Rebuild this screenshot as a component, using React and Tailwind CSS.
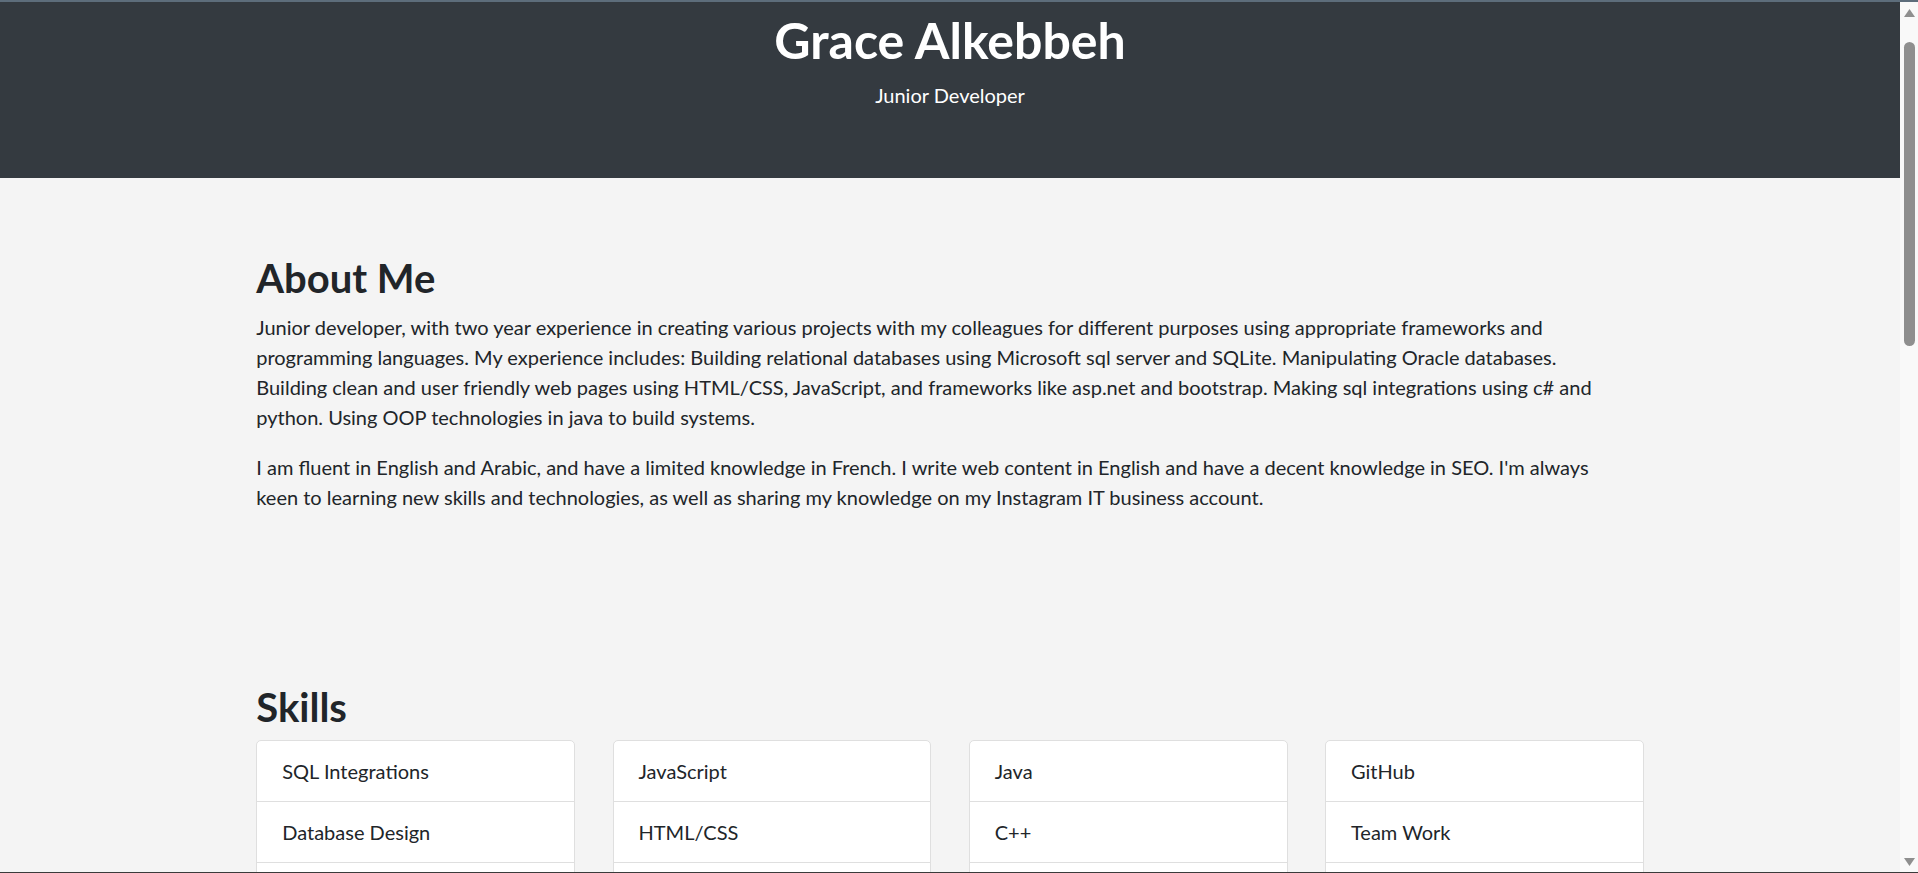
import React from "react";

const skills = [
  ["SQL Integrations", "Database Design"],
  ["JavaScript", "HTML/CSS"],
  ["Java", "C++"],
  ["GitHub", "Team Work"],
];

function Arrow({ down }) {
  return (
    <svg width="11" height="8" viewBox="0 0 11 8" className="block mx-auto">
      {down ? (
        <polygon points="0,0 11,0 5.5,8" fill="#8f8f8f" />
      ) : (
        <polygon points="0,8 11,8 5.5,0" fill="#8f8f8f" />
      )}
    </svg>
  );
}

export default function App() {
  return (
    <div className="h-[873px] w-full flex flex-col overflow-hidden bg-[#f4f4f4] font-['Lato',sans-serif] text-[#212529]">
      <div className="h-[2px] shrink-0 bg-[#5d6d7b]" />
      <div className="flex flex-1 min-h-0">
        <div className="flex-1 min-w-0 overflow-hidden">
          <header className="h-[176px] bg-[#343a40] pt-[8px] text-center text-white">
            <h1 className="text-[50px] leading-[60px] font-bold mb-[10px]">Grace Alkebbeh</h1>
            <p className="text-[20px] leading-[30px]">Junior Developer</p>
          </header>
          <main className="w-[1425px] mx-auto px-[18.75px] pt-[76px]">
            <section>
              <h2 className="text-[40px] leading-[48px] font-bold mb-[10px]">About Me</h2>
              <p className="text-[20px] leading-[30px] mb-[20px]">
                Junior developer, with two year experience in creating various projects with my colleagues for different purposes using appropriate frameworks and
                <br />
                programming languages. My experience includes: Building relational databases using Microsoft sql server and SQLite. Manipulating Oracle databases.
                <br />
                Building clean and user friendly web pages using HTML/CSS, JavaScript, and frameworks like asp.net and bootstrap. Making sql integrations using c# and
                <br />
                python. Using OOP technologies in java to build systems.
              </p>
              <p className="text-[20px] leading-[30px]">
                I am fluent in English and Arabic, and have a limited knowledge in French. I write web content in English and have a decent knowledge in SEO. I'm always
                <br />
                keen to learning new skills and technologies, as well as sharing my knowledge on my Instagram IT business account.
              </p>
            </section>
            <section className="pt-[171px]">
              <h2 className="text-[40px] leading-[48px] font-bold mb-[9px]">Skills</h2>
              <div className="grid grid-cols-4 gap-x-[37.5px]">
                {skills.map((col, i) => (
                  <ul key={i} className="bg-white border border-[#dfdfdf] rounded-[5px]">
                    {col.map((s) => (
                      <li key={s} className="px-[25px] py-[15px] text-[20px] leading-[30px] border-b border-[#dfdfdf]">
                        {s}
                      </li>
                    ))}
                    <li className="h-[61px]" />
                  </ul>
                ))}
              </div>
            </section>
          </main>
        </div>
        <div className="w-[18px] shrink-0 bg-[#f9f9f9] flex flex-col pt-[7px] pb-[6px]">
          <Arrow />
          <div className="mt-[25px] mx-auto w-[11px] h-[304px] rounded-full bg-[#8f8f8f]" />
          <div className="flex-1" />
          <Arrow down />
        </div>
      </div>
      <div className="h-[1px] shrink-0 bg-[#3a3a3a]" />
    </div>
  );
}
